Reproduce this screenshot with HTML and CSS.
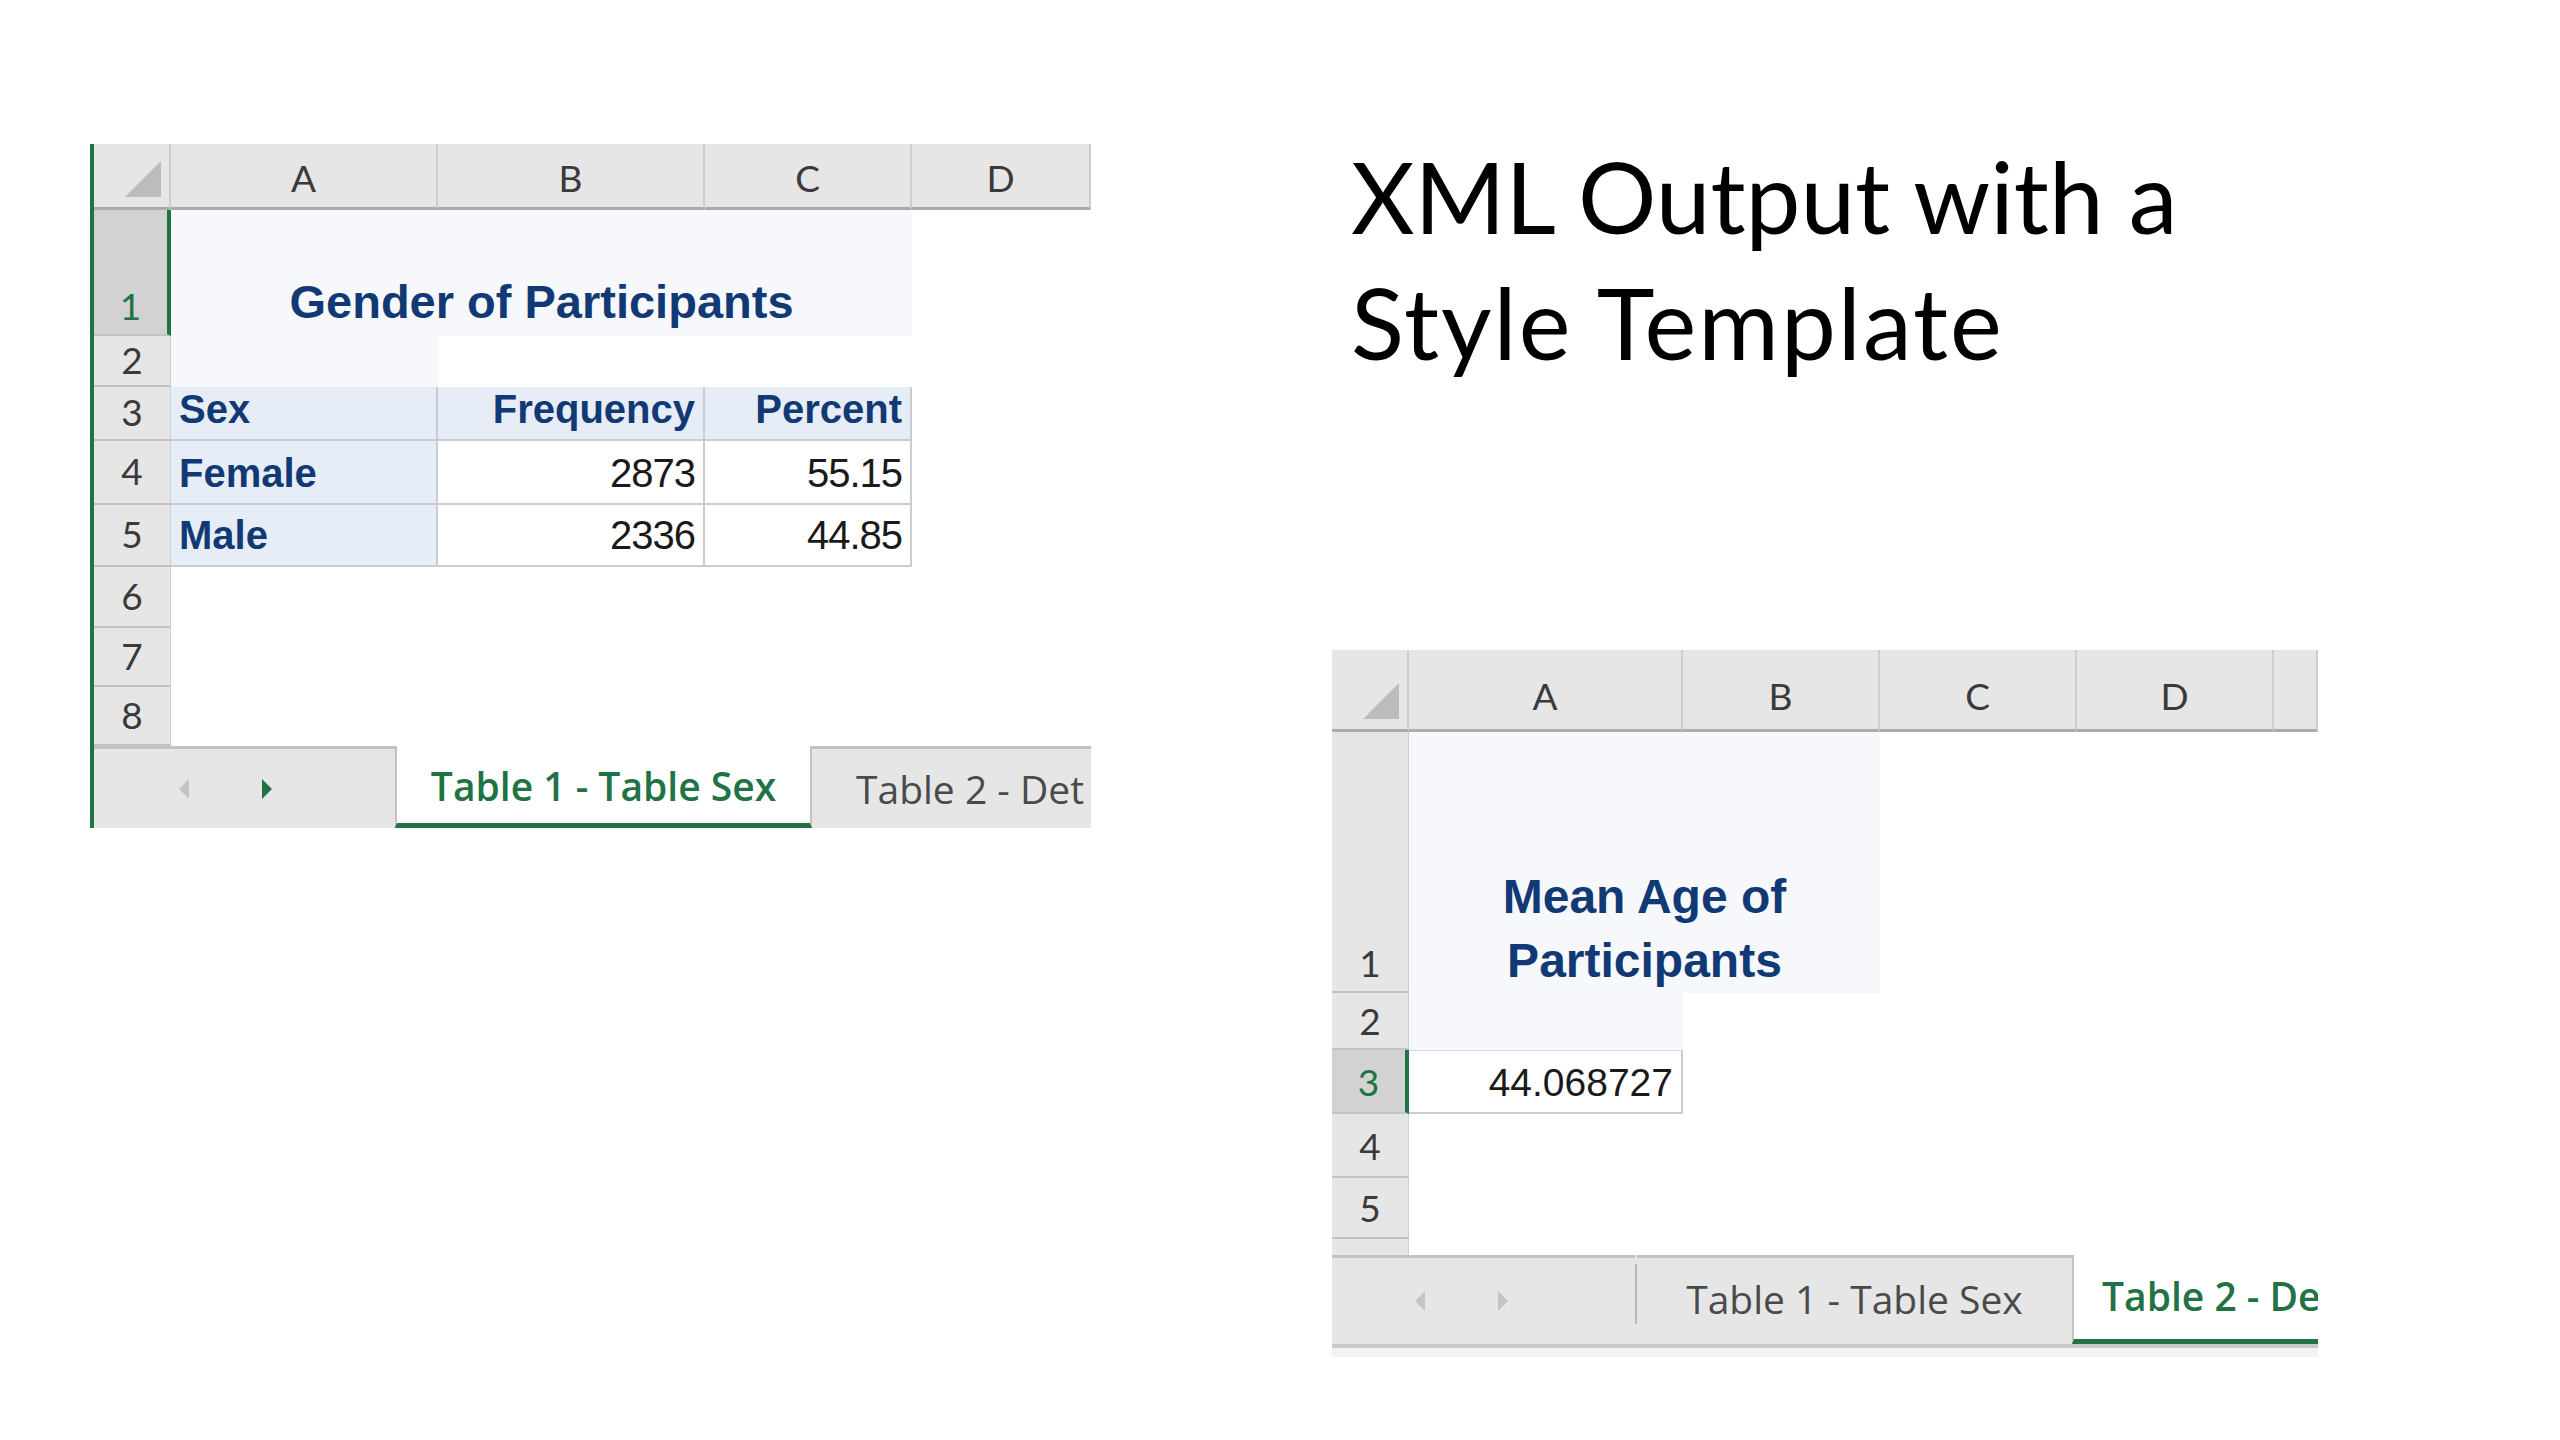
FILE: index.html
```html
<!DOCTYPE html>
<html lang="en">
<head>
    <meta charset="UTF-8">
    <meta name="viewport" content="width=device-width, initial-scale=1.0">
    <title>XML Output with a Style Template</title>
    <link rel="stylesheet" href="styles.css">
</head>
<body>
    <div class="page">
        <!-- sheet 1: gender table -->
        <div class="sheet sheet--gender">
            <div class="grid grid--gender">
                <div class="corner"><svg width="36" height="36" viewBox="0 0 36 36"><polygon points="36,0 36,36 0,36" fill="#bcbcbc"/></svg></div>
                <div class="col-head">A</div>
                <div class="col-head">B</div>
                <div class="col-head">C</div>
                <div class="col-head">D</div>

                <div class="row-head row-head--tall row-head--sel">1</div>
                <div class="cell cell--tint title-cell span-3">Gender of Participants</div>
                <div class="cell"></div>

                <div class="row-head">2</div>
                <div class="cell cell--tint"></div>
                <div class="cell span-3"></div>

                <div class="row-head">3</div>
                <div class="cell tbl tbl--head">Sex</div>
                <div class="cell tbl tbl--head right">Frequency</div>
                <div class="cell tbl tbl--head right">Percent</div>
                <div class="cell"></div>

                <div class="row-head">4</div>
                <div class="cell tbl tbl--head">Female</div>
                <div class="cell tbl num">2873</div>
                <div class="cell tbl num">55.15</div>
                <div class="cell"></div>

                <div class="row-head">5</div>
                <div class="cell tbl tbl--head">Male</div>
                <div class="cell tbl num">2336</div>
                <div class="cell tbl num">44.85</div>
                <div class="cell"></div>

                <div class="row-head">6</div>
                <div class="cell span-4"></div>
                <div class="row-head">7</div>
                <div class="cell span-4"></div>
                <div class="row-head">8</div>
                <div class="cell span-4"></div>
            </div>
            <div class="tabbar">
                <div class="tab-nav">
                    <svg class="arrow" width="10" height="20" viewBox="0 0 10 20"><polygon points="10,0 10,20 0,10" fill="#c4c4c4"/></svg>
                    <svg class="arrow" width="10" height="20" viewBox="0 0 10 20"><polygon points="0,0 0,20 10,10" fill="#217346"/></svg>
                </div>
                <div class="tab tab--active">Table 1 - Table Sex</div>
                <div class="tab">Table 2 - Det</div>
            </div>
        </div>

        <div class="side">
            <h1 class="slide-title">XML Output with a<br><span class="slide-title__second">Style Template</span></h1>

            <!-- sheet 2: mean age -->
            <div class="sheet sheet--age">
                <div class="grid grid--age">
                    <div class="corner"><svg width="36" height="36" viewBox="0 0 36 36"><polygon points="36,0 36,36 0,36" fill="#bcbcbc"/></svg></div>
                    <div class="col-head">A</div>
                    <div class="col-head">B</div>
                    <div class="col-head">C</div>
                    <div class="col-head">D</div>
                    <div class="col-head"></div>

                    <div class="row-head row-head--tall">1</div>
                    <div class="cell cell--tint title-cell title-cell--wrap span-2">Mean Age of<br>Participants</div>
                    <div class="cell span-3"></div>

                    <div class="row-head">2</div>
                    <div class="cell cell--tint"></div>
                    <div class="cell span-4"></div>

                    <div class="row-head row-head--sel">3</div>
                    <div class="cell tbl num">44.068727</div>
                    <div class="cell span-4"></div>

                    <div class="row-head">4</div>
                    <div class="cell span-5"></div>
                    <div class="row-head">5</div>
                    <div class="cell span-5"></div>
                    <div class="row-head row-head--cut"></div>
                    <div class="cell span-5"></div>
                </div>
                <div class="tabbar">
                    <div class="tab-nav">
                        <svg class="arrow" width="10" height="20" viewBox="0 0 10 20"><polygon points="10,0 10,20 0,10" fill="#c4c4c4"/></svg>
                        <svg class="arrow" width="10" height="20" viewBox="0 0 10 20"><polygon points="0,0 0,20 10,10" fill="#c4c4c4"/></svg>
                    </div>
                    <div class="tab-sep"></div>
                    <div class="tab tab--plain">Table 1 - Table Sex</div>
                    <div class="tab tab--active">Table 2 - De</div>
                </div>
                <div class="scroll-strip"></div>
            </div>
        </div>
    </div>
</body>
</html>
```

FILE: styles.css
```css
body{
    margin: 0;
    background-color: #ffffff;
}
.page{
    display: flex;
    align-items: flex-start;
    gap: 241px;
    padding: 133px 0 0 90px;
}
.sheet{
    overflow: hidden;
    background-color: #ffffff;
}
.sheet--gender{
    margin-top: 11px;
    width: 1001px;
    border-left: 4px solid #217346;
    box-sizing: border-box;
}
.sheet--age{
    width: 986px;
    margin-top: 265px;
}
.grid{
    display: grid;
}
.grid--gender{
    grid-template-columns: 77px 267px 267px 207px 179px;
    grid-template-rows: 66px 126px 51px 54px 64px 62px 61px 59px 59px;
}
.grid--age{
    grid-template-columns: 77px 274px 197px 197px 197px 44px;
    grid-template-rows: 82px 261px 57px 64px 64px 61px 16px;
}

/* headers */
.corner, .col-head, .row-head{
    box-sizing: border-box;
    background-color: #e6e6e6;
    font-family: Lato, "Open Sans", sans-serif;
    font-size: 37px;
    color: #3a3a3a;
    line-height: 1;
}
.corner{
    display: flex;
    justify-content: flex-end;
    align-items: flex-end;
    padding: 0 8px 10px 0;
    border-right: 2px solid #cdcdcd;
    border-bottom: 3px solid #ababab;
}
.col-head{
    display: flex;
    justify-content: center;
    align-items: center;
    border-right: 2px solid #cdcdcd;
    border-bottom: 3px solid #ababab;
    padding-top: 4px;
}
.grid--age .col-head{
    padding-top: 12px;
}
.row-head{
    display: flex;
    justify-content: center;
    align-items: center;
    border-bottom: 2px solid #c2c2c2;
    border-right: 1px solid #d0d0d0;
}
.grid--gender .row-head{
    padding-bottom: 3px;
}
.grid--gender .row-head--tall, .row-head--tall{
    align-items: flex-end;
    padding-bottom: 10px;
}
.row-head--sel{
    background-color: #d2d2d2;
    color: #217346;
    border-right: 4px solid #217346;
}
.row-head--cut{
    border-bottom: none;
}

/* cells */
.cell{
    box-sizing: border-box;
    display: flex;
    align-items: flex-end;
    padding: 0 8px 10px 8px;
    font-family: "Liberation Sans", Arial, sans-serif;
    font-size: 40px;
    line-height: 1;
    color: #111111;
}
.span-2{ grid-column: span 2; }
.span-3{ grid-column: span 3; }
.span-4{ grid-column: span 4; }
.span-5{ grid-column: span 5; }
.cell--tint{
    background-color: #f6f8fc;
}
.title-cell{
    justify-content: center;
    font-weight: bold;
    font-size: 47px;
    color: #113a75;
    padding-bottom: 11px;
}
.title-cell--wrap{
    font-size: 48px;
    line-height: 64px;
    text-align: center;
    padding-bottom: 0;
}
.tbl{
    border-right: 2px solid #c9ccd2;
    border-bottom: 2px solid #c9ccd2;
}
.tbl--head{
    background-color: #e7edf7;
    font-weight: bold;
    color: #113a75;
}
.right, .num{
    justify-content: flex-end;
}
.num{
    color: #1a1a1a;
    letter-spacing: -1px;
}
.grid--age .num{
    font-size: 39px;
    letter-spacing: 0;
    border-top: 1px solid #d8d8d8;
}

/* sheet tabs */
.tabbar{
    display: flex;
    background-color: #e6e6e6;
    font-family: "Open Sans", Lato, sans-serif;
    font-size: 39px;
    white-space: nowrap;
}
.grid--gender + .tabbar{
    height: 82px;
}
.grid--age + .tabbar{
    height: 89px;
}
.tab-nav{
    box-sizing: border-box;
    width: 301px;
    flex-shrink: 0;
    display: flex;
    align-items: center;
    gap: 73px;
    padding-left: 85px;
    border-top: 3px solid #c2c2c2;
}
.sheet--age .tab-nav{
    width: 303px;
    padding-left: 83px;
}
.tab-sep{
    width: 2px;
    height: 60px;
    margin-top: 9px;
    background-color: #b8b8b8;
    flex-shrink: 0;
}
.tab{
    box-sizing: border-box;
    flex-shrink: 0;
    display: flex;
    align-items: center;
    padding: 0 44px;
    color: #4a4a4a;
    border-top: 3px solid #c2c2c2;
}
.tab--plain{
    width: 435px;
    justify-content: center;
    padding-bottom: 5px;
}
.tab--active{
    width: 417px;
    justify-content: center;
    background-color: #ffffff;
    color: #217346;
    font-weight: 600;
    border-top: none;
    border-left: 2px solid #c2c2c2;
    border-right: 2px solid #c2c2c2;
    border-bottom: 5px solid #217346;
    padding-top: 2px;
}
.sheet--age .tab--active{
    width: 260px;
    justify-content: flex-start;
    padding: 0 0 4px 28px;
    border-right: none;
}
.scroll-strip{
    height: 9px;
    border-top: 4px solid #c9c9c9;
    background-color: #f2f2f2;
}

/* slide title */
.slide-title{
    margin: 0 0 0 19px;
    font-family: Lato, "Open Sans", sans-serif;
    font-weight: 400;
    font-size: 98px;
    line-height: 126px;
    color: #000000;
}
.slide-title__second{
    letter-spacing: 2px;
}
```
